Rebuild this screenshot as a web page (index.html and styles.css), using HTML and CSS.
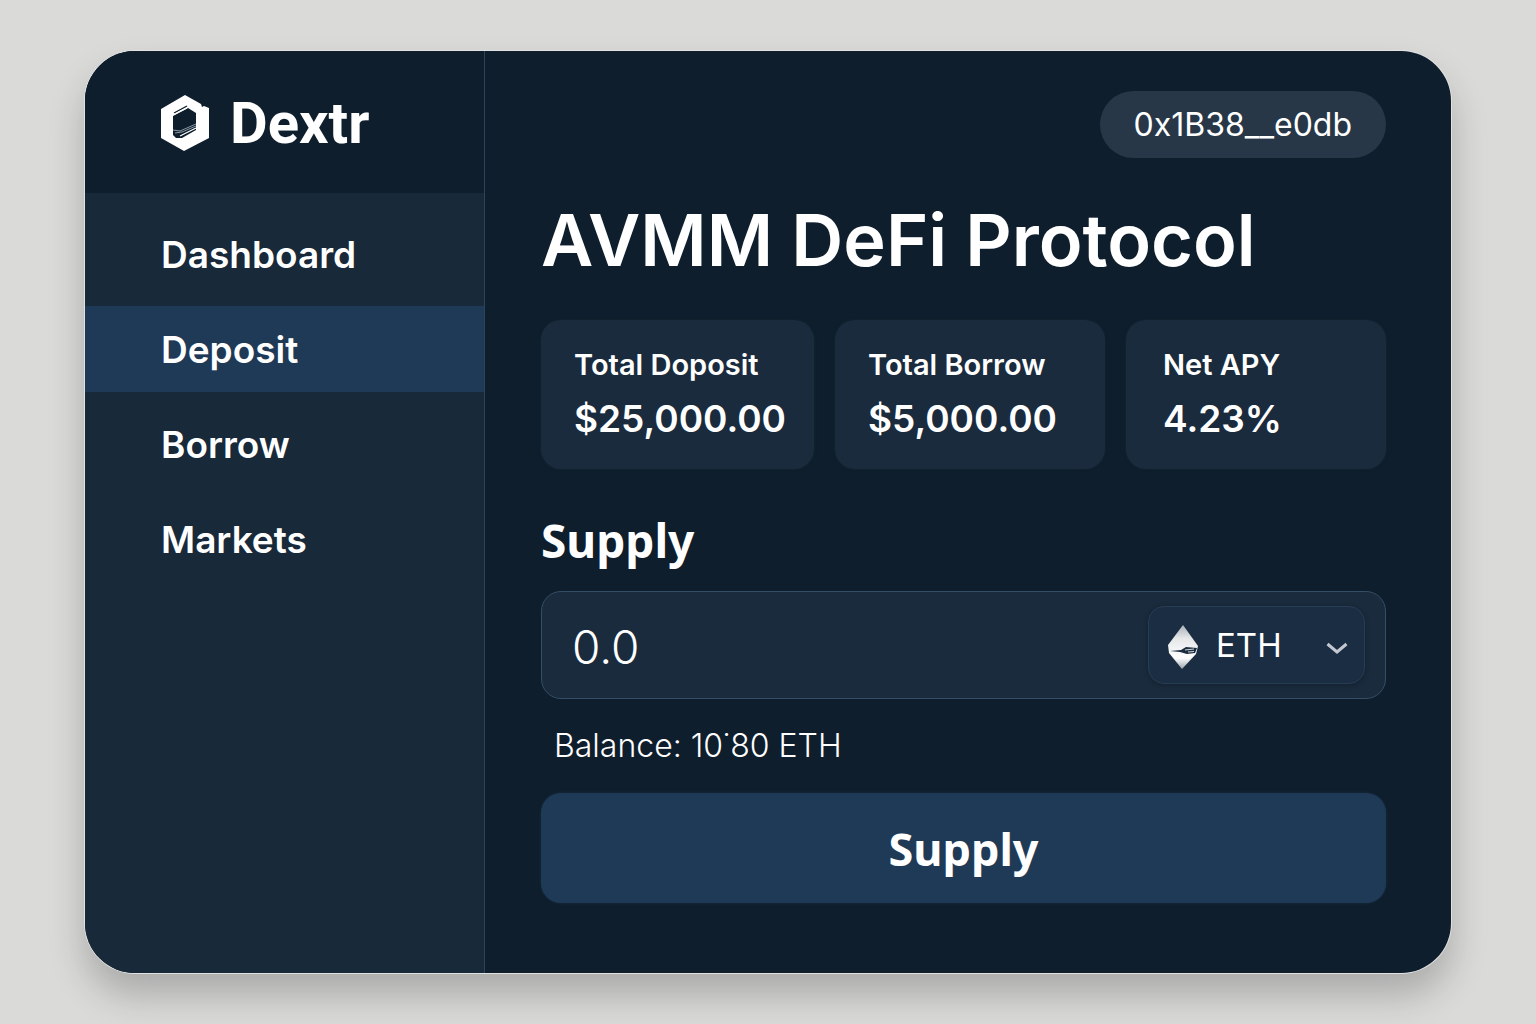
FILE: index.html
```html
<!DOCTYPE html>
<html lang="en">
<head>
  <meta charset="UTF-8" />
  <meta name="viewport" content="width=device-width, initial-scale=1.0"/>
  <title>Dextr - AVMM DeFi Protocol</title>
  <link rel="stylesheet" href="styles.css">
</head>
<body>

  <div class="app">
    <aside class="sidebar">
      <div class="brand">
        <svg class="brand-logo" viewBox="0 0 50 56" aria-hidden="true">
          <path fill="#fff" d="M25 0 L41 9 L42 12 L44 11 L49 13 V43 L24 56 L1 43 V14 Z"/>
          <path fill="#0e1e2c" d="M13 21 L28 13 L36 18 V35 L22 43 L16 43 L13 40 Z"/>
          <path fill="none" stroke="#0e1e2c" stroke-width="1.4" d="M14 18 L27 11"/>
          <path fill="none" stroke="#fff" stroke-width="1.2" d="M13 20 L27 13 M20 41 L36 33"/>
          <path fill="none" stroke="#8b98a4" stroke-width="1" d="M13 35 L20 36 L36 29 M15 38 L22 37 L36 31"/>
        </svg>
        <span class="brand-name">Dextr</span>
      </div>

      <nav class="menu">
        <a href="#dashboard">Dashboard</a>
        <a href="#deposit" class="active">Deposit</a>
        <a href="#borrow">Borrow</a>
        <a href="#markets">Markets</a>
      </nav>
    </aside>

    <main class="content">
      <button type="button" class="wallet">0x1B38__e0db</button>

      <h1>AVMM DeFi Protocol</h1>

      <div class="stats">
        <div class="stat-box">
          <h3>Total Doposit</h3>
          <p>$25,000.00</p>
        </div>
        <div class="stat-box">
          <h3>Total Borrow</h3>
          <p>$5,000.00</p>
        </div>
        <div class="stat-box wide">
          <h3>Net APY</h3>
          <p>4.23%</p>
        </div>
      </div>

      <form id="supply-form">
        <h2><label for="amount">Supply</label></h2>

        <div class="amount-box">
          <input type="text" id="amount" value="0.0" inputmode="decimal" />
          <div class="token">
            <svg class="token-icon" viewBox="0 0 32 44" aria-hidden="true">
              <defs>
                <linearGradient id="eth" x1="0" y1="0" x2="0" y2="1">
                  <stop offset="0" stop-color="#aab1b8"/>
                  <stop offset="0.3" stop-color="#e4e6e8"/>
                  <stop offset="0.75" stop-color="#fff"/>
                  <stop offset="1" stop-color="#9aa3ab"/>
                </linearGradient>
              </defs>
              <path fill="url(#eth)" d="M16 0 L31 21 L29 29 L15 44 L2 28 L1 20 Z"/>
              <path fill="#1b2c3f" d="M3 26 L14 25 L19 22 L30 23 L28 28 L20 29 L13 27 Z"/>
              <path fill="none" stroke="#cfd5da" stroke-width="1.2" d="M18 25 L27 24 M21 27 L27 26.500"/>
            </svg>
            <select id="token" aria-label="Token">
              <option value="ETH">ETH</option>
              <option value="USDC">USDC</option>
              <option value="DAI">DAI</option>
            </select>
            <svg class="token-arrow" viewBox="0 0 22 12" aria-hidden="true">
              <path fill="none" stroke="#c3c8d0" stroke-width="3" d="M1.500 2 L11 10 L20.500 2"/>
            </svg>
          </div>
        </div>

        <p class="balance">Balance: 10˙80 ETH</p>

        <button type="button" class="supply-btn">Supply</button>
      </form>
    </main>
  </div>

</body>
</html>
```
FILE: styles.css
```css
* {
  box-sizing: border-box;
}

body {
  font-family: Inter, "Liberation Sans", sans-serif;
  background: #dadad9;
  margin: 0;
  padding: 51px 85px;
  min-height: 100vh;
  display: flex;
  color: #fff;
}

h1, h2, h3, p {
  margin: 0;
}

.app {
  flex: 1;
  display: flex;
  background: #0e1e2c;
  border-radius: 50px;
  overflow: hidden;
  box-shadow: 0 0 0 1px #e2e2e2, 0 22px 36px rgba(0, 0, 0, 0.22);
}

/* sidebar */
.sidebar {
  width: 400px;
  flex-shrink: 0;
  background: #18293a;
  border-right: 1px solid #2c455c;
}

.brand {
  height: 142px;
  display: flex;
  align-items: center;
  gap: 20px;
  padding: 2px 75px 0;
  background: #0e1e2c;
}

.brand-logo {
  width: 50px;
  height: 56px;
}

.brand-name {
  font-family: Roboto, sans-serif;
  font-size: 58px;
  font-weight: 700;
}

.menu {
  display: flex;
  flex-direction: column;
  gap: 9px;
  padding-top: 18px;
}

.menu a {
  height: 86px;
  line-height: 88px;
  padding-left: 76px;
  font-size: 37px;
  font-weight: 600;
  color: #fff;
  text-decoration: none;
}

.menu a.active,
.menu a:hover {
  background: #1f3a57;
}

/* main area */
.content {
  flex: 1;
  min-width: 0;
  display: flex;
  flex-direction: column;
  padding: 40px 65px 70px 56px;
}

button {
  font-family: inherit;
  color: #fff;
  border: none;
  cursor: pointer;
}

.wallet {
  align-self: flex-end;
  height: 67px;
  padding: 0 34px;
  border-radius: 34px;
  background: #273748;
  font-size: 32px;
}

h1 {
  margin: 42px 0 40px;
  font-size: 72px;
  line-height: 80px;
  font-weight: 600;
}

.stats {
  display: grid;
  grid-template-columns: 273fr 270fr 260fr;
  gap: 21px;
}

.stat-box {
  padding: 27px 0 26px 33px;
  border-radius: 20px;
  background: #1a2b3d;
  box-shadow: 0 0 2px 1px #12222f;
}

.stat-box.wide {
  padding-left: 37px;
}

.stat-box h3 {
  font-size: 29px;
  line-height: 36px;
  font-weight: 600;
}

.stat-box p {
  margin-top: 12px;
  font-size: 37px;
  line-height: 48px;
  font-weight: 600;
}

h2 {
  margin: 39px 0 19px;
  font-family: "Noto Sans", sans-serif;
  font-size: 46px;
  line-height: 64px;
  font-weight: 700;
}

.amount-box {
  display: flex;
  align-items: center;
  height: 108px;
  padding: 0 20px 0 30px;
  background: #1a2b3d;
  border: 1px solid #344e66;
  border-radius: 20px;
}

.amount-box input {
  flex: 1;
  min-width: 0;
  padding: 4px 0 0;
  border: none;
  outline: none;
  background: none;
  color: #fff;
  font-family: inherit;
  font-size: 46px;
  font-weight: 300;
}

.token {
  position: relative;
  width: 217px;
  height: 78px;
}

.token select {
  appearance: none;
  width: 100%;
  height: 100%;
  padding: 0 60px 0 67px;
  border: 1px solid #263d54;
  border-radius: 16px;
  background: #1b2d42;
  color: #fff;
  font-family: inherit;
  font-size: 33px;
  box-shadow: 0 1px 5px rgba(0, 0, 0, 0.25);
}

/* icons lie over the select */
.token-icon,
.token-arrow {
  position: absolute;
  pointer-events: none;
}

.token-icon {
  left: 19px;
  top: 19px;
  width: 32px;
  height: 44px;
}

.token-arrow {
  right: 17px;
  top: 36px;
  width: 22px;
  height: 12px;
}

.balance {
  margin: 25px 0 25px 13px;
  font-size: 32px;
  line-height: 44px;
  font-weight: 300;
}

.supply-btn {
  display: block;
  width: 100%;
  height: 110px;
  border-radius: 20px;
  background: #1f3a57;
  box-shadow: 0 0 2px 1px #142636;
  font-family: "Noto Sans", sans-serif;
  font-size: 45px;
  font-weight: 700;
}
```
